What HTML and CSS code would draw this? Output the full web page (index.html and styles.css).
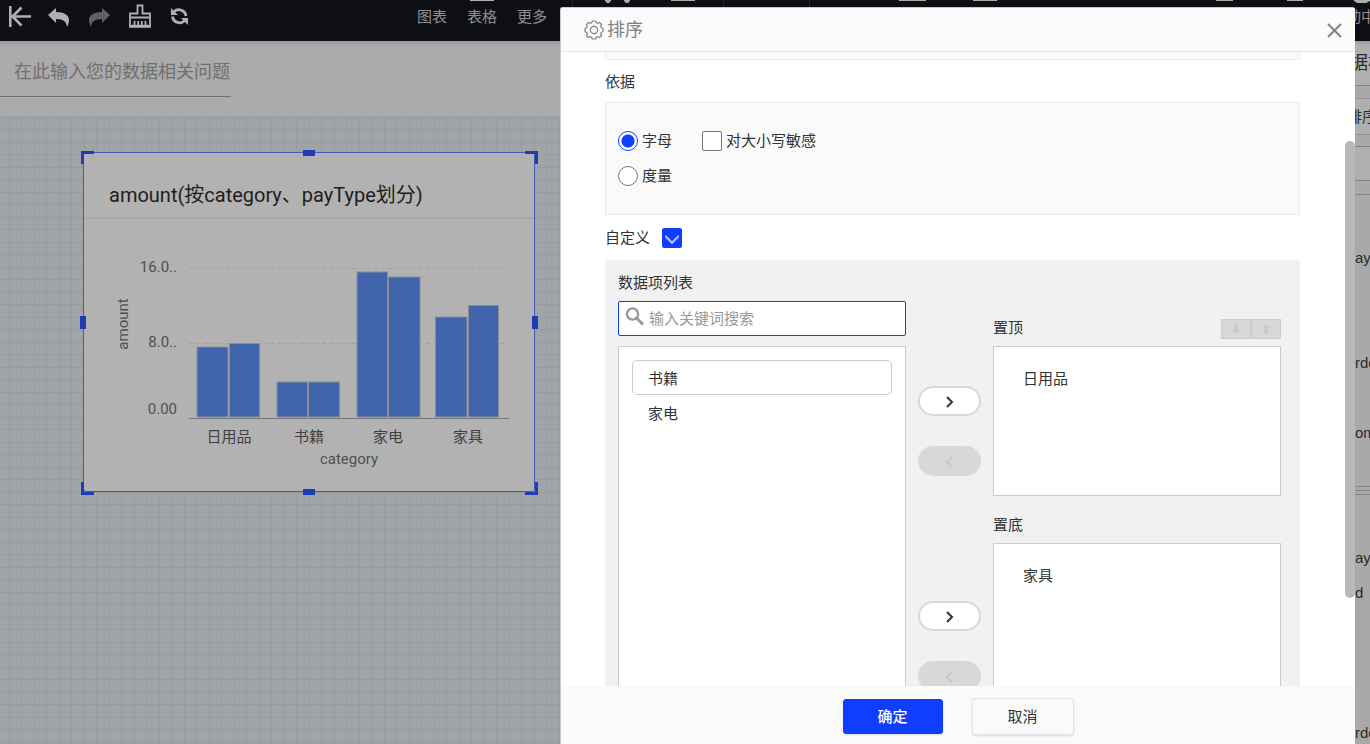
FILE: index.html
```html
<!DOCTYPE html>
<html lang="zh-CN">
<head>
<meta charset="utf-8">
<title>排序</title>
<link rel="stylesheet" href="styles.css">
</head>
<body>
<div class="app">
  <header class="topbar">
    <svg class="ribbon" width="1370" height="7" viewBox="0 0 1370 7" aria-hidden="true">
      <path class="ribbon-icon" d="M470 0h24v1h-24zM671 0h24v1h-24zM899 0h27v1h-27zM973 0h24v1h-24zM1216 0h17v1h-17zM1287 0h16v1h-16z"/>
      <path class="ribbon-icon" d="M605 0h6v1l-2 2h-2l-2-2zM624 0h6v1l-2 2h-2l-2-2zM1353 0h17v1l-4 2h-9z"/>
      <path class="ribbon-rule" d="M572 0h1v7h-1zM723 0h1v7h-1zM809 0h1v7h-1z"/>
    </svg>
    <nav class="tools">
      <button class="tool" aria-label="返回"><svg width="24" height="24" viewBox="0 0 24 24"><path d="M3.300 2v21M24 12.500H5M14.500 3.500l-9 9 9 9" fill="none" stroke="currentColor" stroke-width="2.600"/></svg></button>
      <button class="tool" aria-label="撤销"><svg width="24" height="24" viewBox="0 0 24 24"><path d="M1 11L9 4v4c8 0 13 3 13 8 0 3-1 5-2 7-.5-5-3-8-11-8v4z" fill="currentColor"/></svg></button>
      <button class="tool tool-off" aria-label="重做"><svg width="24" height="24" viewBox="0 0 24 24"><path d="M23 11l-8-7v4C7 8 2 11 2 16c0 3 1 5 2 7 .5-5 3-8 11-8v4z" fill="currentColor"/></svg></button>
      <button class="tool" aria-label="清除"><svg width="24" height="24" viewBox="0 0 24 24"><path d="M10.500 1.500h5v8H23v13H3v-13h7.500zM3 13.500h20M7.500 17v5M11.200 17v5M14.800 17v5M18.500 17v5" fill="none" stroke="currentColor" stroke-width="1.800"/><path d="M2.200 22.200h21.600" stroke="currentColor" stroke-width="2.800"/></svg></button>
      <button class="tool" aria-label="刷新"><svg width="24" height="24" viewBox="0 0 24 24"><path d="M6.500 8.500a7 7 0 0 1 12.500 3.500M18 16a7 7 0 0 1-12.500-3.500" fill="none" stroke="currentColor" stroke-width="2.800"/><path d="M4 4v7h7zM21 21v-7h-7z" fill="currentColor"/></svg></button>
    </nav>
    <nav class="menus">
      <a class="menu" href="#chart">图表</a>
      <a class="menu" href="#table">表格</a>
      <a class="menu" href="#more">更多</a>
    </nav>
    <span class="status">动中</span>
  </header>
  <div class="workspace">
    <main class="main">
      <div class="ask"><input class="ask-input" type="text" placeholder="在此输入您的数据相关问题" aria-label="在此输入您的数据相关问题"></div>
      <div class="canvas">
        <section class="widget">
          <h2 class="widget-title">amount(按category、payType划分)</h2>
          <svg class="chart" viewBox="84 219 450 272" role="img" aria-label="amount / category">
            <path class="grid-line" d="M189 268.500h320M189 343.500h320"/>
            <g class="bars">
              <rect x="197" y="347" width="31" height="70"/><rect x="229.500" y="343.500" width="30" height="73.500"/>
              <rect x="277" y="382" width="30.500" height="35"/><rect x="308.500" y="382" width="31" height="35"/>
              <rect x="357" y="272" width="30.500" height="145"/><rect x="388.500" y="277" width="31.500" height="140"/>
              <rect x="435.500" y="317" width="31.500" height="100"/><rect x="468.500" y="305.500" width="30" height="111.500"/>
            </g>
            <path class="base-line" d="M189 418.500h320"/>
            <g class="ticks" text-anchor="end"><text x="177" y="272">16.0..</text><text x="177" y="347">8.0..</text><text x="177" y="414">0.00</text></g>
            <g class="cats" text-anchor="middle"><text x="229" y="442">日用品</text><text x="309" y="442">书籍</text><text x="388" y="442">家电</text><text x="468" y="442">家具</text></g>
            <g class="ticks" text-anchor="middle"><text x="349" y="464">category</text><text transform="translate(128 324) rotate(-90)">amount</text></g>
          </svg>
          <i class="corner nw"></i><i class="corner ne"></i><i class="corner sw"></i><i class="corner se"></i>
          <i class="grip north"></i><i class="grip south"></i><i class="grip west"></i><i class="grip east"></i>
        </section>
      </div>
    </main>
    <aside class="side">
      <div class="side-title">据模</div>
      <div class="side-tab">排序</div>
      <div class="side-filter"></div>
      <ul class="fields">
        <li class="field first">ay</li>
        <li class="field">rde</li>
        <li class="field">om</li>
        <li class="splitter"></li>
        <li class="field">ay</li>
        <li class="field near">d</li>
        <li class="field">rde</li>
      </ul>
    </aside>
  </div>
</div>

<div class="dialog" role="dialog" aria-labelledby="dialog-title">
  <header class="dialog-head">
    <svg width="20" height="20" viewBox="0 0 20 20" fill="none" stroke="currentColor" stroke-width="1.200" stroke-linejoin="round" aria-hidden="true"><path d="M8.300 1h3.400l.5 1.600 1.700.7 1.600-.9 2.100 2.100-.9 1.600.7 1.700 1.600.5v3.400l-1.600.5-.7 1.700.9 1.600-2.100 2.100-1.600-.9-1.700.7-.5 1.600H8.300l-.5-1.600-1.700-.7-1.600.9-2.100-2.100.9-1.600-.7-1.700L1 11.700V8.300l1.600-.5.7-1.700-.9-1.600 2.100-2.100 1.600.9 1.700-.7z"/><circle cx="10" cy="10" r="3.600"/></svg>
    <h1 class="dialog-title" id="dialog-title">排序</h1>
    <button class="close" aria-label="关闭"><svg width="16" height="16" viewBox="0 0 16 16"><path d="M1 2l13 13M14 2L1 15" stroke="currentColor" stroke-width="1.800"/></svg></button>
  </header>
  <div class="dialog-body">
    <div class="prev-box"></div>
    <h3 class="section-label">依据</h3>
    <div class="basis">
      <div class="basis-row">
        <label class="choice choice-first"><input class="radio" type="radio" name="basis" checked>字母</label>
        <label class="choice"><input class="check" type="checkbox">对大小写敏感</label>
      </div>
      <div class="basis-row"><label class="choice"><input class="radio" type="radio" name="basis">度量</label></div>
    </div>
    <label class="custom-label">自定义<input class="check" type="checkbox" checked></label>
    <div class="custom">
      <div class="source">
        <label class="list-label" for="search">数据项列表</label>
        <div class="search">
          <svg width="20" height="20" viewBox="0 0 20 20" fill="none" stroke="currentColor" aria-hidden="true"><circle cx="7.500" cy="7" r="5.600" stroke-width="2.400"/><path d="M11.500 11l6.500 6.500" stroke-width="3"/></svg>
          <input class="search-input" id="search" type="text" placeholder="输入关键词搜索">
        </div>
        <ul class="list list-all"><li class="item item-active">书籍</li><li class="item">家电</li></ul>
      </div>
      <div class="movers">
        <div class="pair"><button class="pill" aria-label="置顶"><svg width="10" height="12" viewBox="0 0 10 12"><path d="M2 2l5 5-5 5" fill="none" stroke="currentColor" stroke-width="2"/></svg></button>
        <button class="pill" disabled aria-label="移出置顶"><svg width="10" height="12" viewBox="0 0 10 12"><path d="M7 2L2 7l5 5" fill="none" stroke="currentColor" stroke-width="2"/></svg></button></div>
        <div class="pair"><button class="pill" aria-label="置底"><svg width="10" height="12" viewBox="0 0 10 12"><path d="M2 2l5 5-5 5" fill="none" stroke="currentColor" stroke-width="2"/></svg></button>
        <button class="pill" disabled aria-label="移出置底"><svg width="10" height="12" viewBox="0 0 10 12"><path d="M7 2L2 7l5 5" fill="none" stroke="currentColor" stroke-width="2"/></svg></button></div>
      </div>
      <div class="targets">
        <div class="target-head"><span>置顶</span>
          <div class="order"><button class="order-btn" disabled aria-label="下移"><svg width="8" height="10" viewBox="0 0 8 10"><path d="M2.500 0h3v6H8L4 10 0 6h2.500z" fill="currentColor"/></svg></button><button class="order-btn" disabled aria-label="上移"><svg width="8" height="10" viewBox="0 0 8 10"><path d="M2.500 10h3V4H8L4 0 0 4h2.500z" fill="currentColor"/></svg></button></div>
        </div>
        <ul class="list"><li class="item">日用品</li></ul>
        <div class="target-head second"><span>置底</span></div>
        <ul class="list"><li class="item">家具</li></ul>
      </div>
    </div>
    <div class="scroll-thumb"></div>
  </div>
  <footer class="dialog-foot">
    <button class="btn btn-primary">确定</button>
    <button class="btn">取消</button>
  </footer>
</div>
</body>
</html>
```
FILE: styles.css
```css
* { box-sizing: border-box; }
body {
  margin: 0;
  overflow: hidden;
  font: 15px/20px Roboto, "Noto Sans CJK SC", sans-serif;
  color: #333;
}
button, input { font: inherit; color: inherit; margin: 0; padding: 0; border: 0; background: none; }
input { outline: 0; }
ul { list-style: none; margin: 0; padding: 0; }
h1, h2, h3 { margin: 0; font-weight: 400; }
svg { display: block; }

.app { display: flex; flex-direction: column; height: 100vh; }

.topbar {
  position: relative;
  z-index: 1;
  display: flex;
  align-items: flex-start;
  height: 41px;
  padding: 4px 0 0 7px;
  background: #0e0f14;
  color: #b0b0b0;
}
.ribbon { position: absolute; top: 0; left: 0; }
.ribbon-icon { fill: #aab0b0; }
.ribbon-rule { fill: #26272b; }
.tools { display: flex; gap: 16px; width: 410px; }
.tool { width: 24px; height: 24px; }
.tool-off { color: #606164; }
.menus { display: flex; gap: 20px; padding-top: 3px; }
.menu { color: #8f8f91; text-decoration: none; }
.status { width: 24px; margin-left: auto; padding-top: 3px; white-space: nowrap; color: #8f8f91; }

.workspace { display: flex; flex: 1; min-height: 0; }
.main { display: flex; flex: 1; flex-direction: column; min-width: 0; }
.ask { height: 75px; background: linear-gradient(#9a9a9a, #ababab 5px); }
.ask-input {
  width: 231px;
  height: 56px;
  padding: 6px 0 0 14px;
  border-bottom: 1px solid #717171;
  font-size: 18px;
}
.ask-input::placeholder { color: #707070; opacity: 1; }

.canvas {
  position: relative;
  flex: 1;
  background-color: #a0a4a7;
  background-image:
    linear-gradient(90deg, transparent 9px, #989c9f 9px 10px, transparent 10px 21px, #989c9f 21px 22px, transparent 22px),
    linear-gradient(transparent 1px, #989c9f 1px 2px, transparent 2px 13px, #989c9f 13px 14px, transparent 14px);
  background-size: 25px 25px;
}
.widget {
  position: absolute;
  top: 36px;
  left: 83px;
  width: 452px;
  border: 1px solid #405ab8;
  border-radius: 3px;
  background: #b2b2b2;
}
.widget-title {
  height: 66px;
  padding: 30px 25px 0;
  border-bottom: 1px solid #a2a2a2;
  font-size: 20px;
  line-height: 24px;
  color: #1e1e1e;
}
.chart { width: 100%; }
.grid-line { fill: none; stroke: #a2a2a2; stroke-dasharray: 4 3.4; }
.base-line { fill: none; stroke: #777; }
.bars { fill: #4064ae; stroke: #8c8d90; }
.ticks { fill: #505050; font-size: 15px; }
.cats { fill: #404040; font-size: 15px; }

.corner { position: absolute; width: 13px; height: 13px; border: 0 solid #1f3cb4; }
.nw { top: -2px; left: -3px; border-width: 3px 0 0 3px; }
.ne { top: -2px; right: -4px; border-width: 3px 3px 0 0; }
.sw { bottom: -4px; left: -3px; border-width: 0 0 3px 3px; }
.se { bottom: -4px; right: -4px; border-width: 0 3px 3px 0; }
.grip { position: absolute; width: 12px; height: 6px; background: #1f3cb4; }
.north { top: -3px; left: 219px; }
.south { bottom: -4px; left: 219px; }
.west, .east { top: 163px; width: 6px; height: 13px; }
.west { left: -4px; }
.east { right: -4px; }

.side {
  width: 30px;
  white-space: nowrap;
  background: #a9a9a9;
  color: #2a2a2a;
}
.side-title { height: 45px; padding: 12px 0 0 10px; border-bottom: 1px solid #858585; background: linear-gradient(#9a9a9a, #b0b0b0 5px); font-size: 18px; }
.side-tab { height: 37px; margin-top: 12px; padding: 8px 0 0 7px; border: solid #949494; border-width: 1px 0; background: #adb0af; }
.side-filter { height: 49px; margin-top: 11px; border: solid #858585; border-width: 1px 0; background: linear-gradient(#b0b0b0 33px, #858585 33px 34px, #a9a9a9 34px); }
.fields { font-family: "Liberation Sans", sans-serif; }
.field { padding-left: 15px; margin-bottom: 50px; }
.first { padding-top: 53px; margin-bottom: 85px; }
.splitter { height: 9px; margin-bottom: 53px; margin-top: -7px; border: solid #858585; border-width: 1px 0; background: linear-gradient(transparent 3px, #858585 3px 4px, transparent 4px); }
.near { margin-top: -35px; margin-bottom: 120px; }

.dialog {
  position: absolute;
  inset: 7px 15px 0 auto;
  display: flex;
  flex-direction: column;
  width: 795px;
  border-left: 1px solid #ccc;
  border-top: 1px solid #ccc;
  border-radius: 3px 3px 0 0;
  background: #fff;
  z-index: 2;
}
.dialog-head {
  display: flex;
  align-items: center;
  flex: none;
  gap: 3px;
  height: 44px;
  padding: 0 12px 0 23px;
  border-bottom: 1px solid #e5e5e5;
  background: #fbfbfb;
  color: #808080;
}
.dialog-title { font-size: 18px; }
.close { width: 16px; height: 16px; margin-left: auto; }
.dialog-body { position: relative; flex: 1; min-height: 0; padding: 0 55px 0 44px; overflow: hidden; }
.prev-box { height: 8px; border: 1px solid #ececec; border-top: 0; background: #fafafa; }
.section-label { padding: 12px 0 10px; font-size: 15px; }
.basis { display: flex; flex-direction: column; gap: 15px; height: 113px; padding: 28px 12px; border: 1px solid #ececec; background: #fafafa; }
.basis-row { display: flex; }
.choice { display: flex; align-items: center; gap: 4px; }
.choice-first { width: 84px; }
.radio, .check { appearance: none; flex: none; width: 20px; height: 20px; border: 1px solid #777; background: #fff; }
.radio { border-radius: 50%; }
.radio:checked { border-color: #0f3eff; background: radial-gradient(circle, #0f3eff 6px, #fff 7px); }
.check { display: grid; place-items: center; border-radius: 2px; }
.check:checked { border-color: #0f3eff; background: #0f3eff; }
.check:checked::before {
  content: "";
  width: 9px;
  height: 9px;
  margin-bottom: 4px;
  border: solid #fff;
  border-width: 0 1px 1px 0;
  box-shadow: 1px 1px #fff8;
  transform: rotate(45deg);
}
.custom-label { display: flex; align-items: center; gap: 12px; height: 45px; }
.custom { display: flex; gap: 12px; padding: 13px 19px 20px 13px; background: #f1f1f1; }
.source, .targets { flex: 1; min-width: 0; }
.list-label { display: block; margin-bottom: 8px; }
.search { display: flex; gap: 4px; height: 35px; padding: 5px 6px; border: 1px solid #0f3eff; border-radius: 2px; background: #fff; color: #999; }
.search-input { flex: 1; min-width: 0; }
.search-input::placeholder { color: #999; opacity: 1; }
.list { height: 150px; padding: 13px; border: 1px solid #ccc; background: #fff; }
.list-all { height: 365px; margin-top: 10px; }
.item { height: 35px; padding: 8px 15px; border: 1px solid transparent; }
.item-active { border-color: #ccc; border-radius: 5px; }
.movers { display: flex; flex-direction: column; gap: 125px; width: 63px; padding-top: 113px; }
.pair { display: flex; flex-direction: column; gap: 30px; }
.pill { display: grid; place-items: center; height: 30px; border: 2px solid #d8d8d8; border-radius: 15px; background: #fff; }
.pill svg { overflow: visible; }
.pill:disabled { background: #d8d8d8; color: #c8c8c8; }
.targets { padding-top: 45px; }
.target-head { display: flex; align-items: flex-start; justify-content: space-between; height: 20px; margin-bottom: 8px; }
.second { margin-top: 19px; }
.order { display: flex; padding-top: 1px; }
.order-btn { display: grid; place-items: center; width: 30px; height: 20px; border: 1px solid #ccc; background: #d8d8d8; color: #c8c8c8; }
.scroll-thumb { position: absolute; top: 89px; right: 0; width: 10px; height: 457px; border-radius: 5px; background: #b8b8b8; }
.dialog-foot { display: flex; align-items: center; justify-content: center; flex: none; gap: 29px; height: 58px; padding-top: 3px; background: #fafafa; }
.btn { width: 102px; height: 37px; border: 1px solid #e4e4e6; border-radius: 3px; background: #f9fafc; box-shadow: 0 1px 2px #0002; }
.btn-primary { width: 100px; height: 35px; border-color: #0f3eff; background: #0f3eff; color: #fff; font-weight: 500; }
```
